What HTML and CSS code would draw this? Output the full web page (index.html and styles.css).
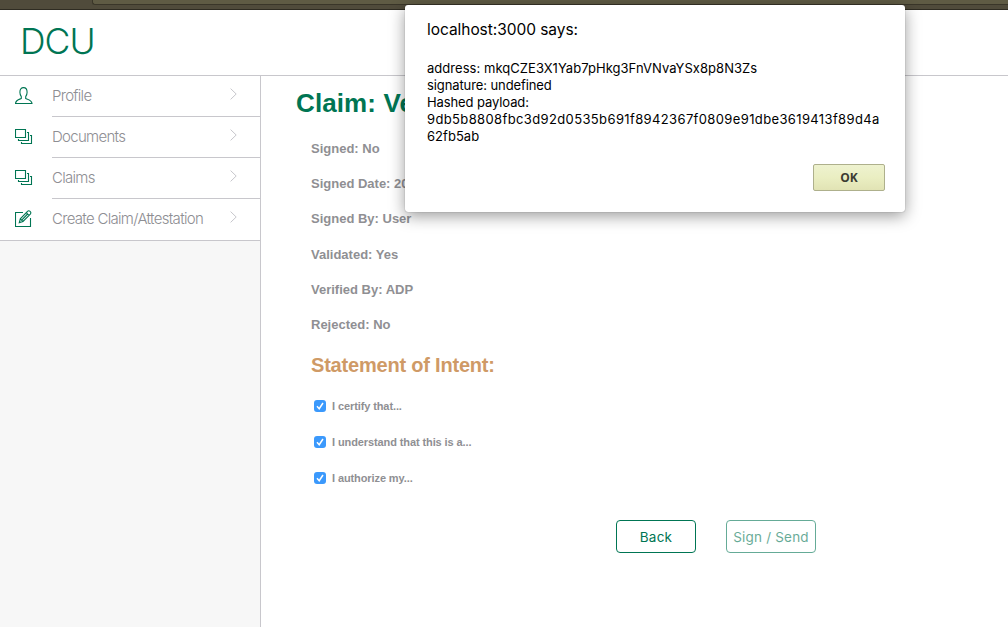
FILE: index.html
```html
<!DOCTYPE html>
<html lang="en">
<head>
<meta charset="utf-8">
<title>DCU</title>
<link rel="stylesheet" href="styles.css">
</head>
<body>
<div class="browser-bar"><div class="address-field"></div></div>
<header class="header"><span class="brand">DCU</span></header>
<div class="layout">
  <nav class="sidebar">
    <a class="item">
      <svg class="icon" viewBox="0 0 18 18"><path d="M6.3 9.6C5.5 8.5 4.9 7 4.9 5.2C4.9 2.200 6.300.6 8.500.6s3.600 1.600 3.600 4.600c0 1.800-.6 3.300-1.400 4.400v1.900c3 1.100 6.100 1.700 6.300 5H.5c.2-3.300 3-3.900 5.800-5z"/></svg>
      <span class="line"><span class="label">Profile</span><svg class="chevron" viewBox="0 0 7 12"><path d="M.6.6L6.200 6L.6 11.400"/></svg></span>
    </a>
    <a class="item">
      <svg class="icon" viewBox="0 0 18 18"><path d="M.5 1.500h10v8H.5zM12 4.500h1.500v8h-10V11M15 7.500h1.500v8h-10V14"/></svg>
      <span class="line"><span class="label">Documents</span><svg class="chevron" viewBox="0 0 7 12"><path d="M.6.6L6.200 6L.6 11.400"/></svg></span>
    </a>
    <a class="item">
      <svg class="icon" viewBox="0 0 18 18"><path d="M.5 1.500h10v8H.5zM12 4.500h1.500v8h-10V11M15 7.500h1.500v8h-10V14"/></svg>
      <span class="line"><span class="label">Claims</span><svg class="chevron" viewBox="0 0 7 12"><path d="M.6.6L6.200 6L.6 11.400"/></svg></span>
    </a>
    <a class="item item-last">
      <svg class="icon" viewBox="0 0 18 18"><path d="M8 2.500H.5v14h15V8M4.300 12.600l1-3.700L12.500 1.300q1.200-1.200 2.600.1t.2 2.700L8 11.500zM5.300 8.900L8 11.500M11.300 2.600l2.700 2.700M6.700 10.200l5.900-6.200"/></svg>
      <span class="line"><span class="label">Create Claim/Attestation</span><svg class="chevron" viewBox="0 0 7 12"><path d="M.6.6L6.200 6L.6 11.400"/></svg></span>
    </a>
  </nav>
  <main class="content">
    <h1 class="title">Claim: Ve</h1>
    <section class="details">
      <p class="field">Signed: No</p>
      <p class="field">Signed Date: 20</p>
      <p class="field">Signed By: User</p>
      <p class="field">Validated: Yes</p>
      <p class="field">Verified By: ADP</p>
      <p class="field">Rejected: No</p>
      <h2 class="subtitle">Statement of Intent:</h2>
      <div class="check"><svg class="box" viewBox="0 0 12 12"><path d="M3 6.300L5.200 8.700L9 3"/></svg><span>I certify that...</span></div>
      <div class="check"><svg class="box" viewBox="0 0 12 12"><path d="M3 6.300L5.200 8.700L9 3"/></svg><span>I understand that this is a...</span></div>
      <div class="check"><svg class="box" viewBox="0 0 12 12"><path d="M3 6.300L5.200 8.700L9 3"/></svg><span>I authorize my...</span></div>
    </section>
    <div class="actions">
      <button class="btn btn-back">Back</button>
      <button class="btn btn-send" disabled>Sign / Send</button>
    </div>
  </main>
</div>
<div class="dialog" role="alertdialog">
  <div class="dialog-title">localhost:3000 says:</div>
  <div class="dialog-text">
    <div>address: mkqCZE3X1Yab7pHkg3FnVNvaYSx8p8N3Zs</div>
    <div class="plain">signature: undefined</div>
    <div class="plain">Hashed payload:</div>
    <div class="hash">9db5b8808fbc3d92d0535b691f8942367f0809e91dbe3619413f89d4a</div>
    <div>62fb5ab</div>
  </div>
  <button class="ok">OK</button>
</div>
</body>
</html>
```
FILE: styles.css
```css
* { box-sizing: border-box; }
body {
  margin: 0;
  height: 627px;
  display: flex;
  flex-direction: column;
  overflow: hidden;
  background: #fff;
  font-family: "Liberation Sans", Arial, sans-serif;
}
.browser-bar {
  flex: none;
  height: 10px;
  padding-left: 92px;
  background: #504b3b;
  border-bottom: 1px solid #2f2c22;
}
.address-field {
  height: 5px;
  background: #5f5b44;
  border: 1px solid #3a3629;
  border-top: 0;
  border-right: 0;
  border-radius: 0 0 0 3px;
}
.header {
  flex: none;
  height: 66px;
  padding: 10px 20px 0 20px;
  border-bottom: 1px solid #c8c7cc;
}
.brand {
  font: 300 35.5px/44px Inter, sans-serif;
  letter-spacing: -1px;
  color: #007553;
}
.layout { flex: 1; display: flex; min-height: 0; }
.sidebar {
  width: 261px;
  background: #f7f7f7;
  border-right: 1px solid #c8c7cc;
}
.item {
  display: flex;
  height: 41px;
  padding-left: 15px;
  background: #fff;
}
.icon {
  flex: none;
  width: 18px;
  height: 18px;
  margin: 11px 19px 0 0;
  fill: none;
  stroke: #007553;
  stroke-width: 1.1;
}
.line {
  flex: 1;
  display: flex;
  justify-content: space-between;
  padding-right: 23px;
  border-bottom: 1px solid #c8c7cc;
}
.item-last { height: 42px; border-bottom: 1px solid #c8c7cc; }
.item-last .line { border-bottom: 0; }
.label {
  font: 300 15px/40px Inter, sans-serif;
  letter-spacing: -0.7px;
  color: #8e8e93;
  white-space: nowrap;
}
.chevron {
  width: 7px;
  height: 12px;
  margin-top: 12px;
  fill: none;
  stroke: #c7c7cc;
}
.content { flex: 1; padding: 11px 0 0 35px; }
.title {
  margin: 0;
  font-size: 26px;
  line-height: 32px;
  letter-spacing: 0.1px;
  color: #007553;
}
.details { padding: 12px 0 0 15px; }
.field {
  margin: 0;
  height: 35.2px;
  font-size: 13px;
  font-weight: 700;
  line-height: 36px;
  color: #8f8f93;
}
.subtitle {
  margin: 0;
  padding: 11px 0;
  font-size: 20px;
  line-height: 24px;
  letter-spacing: -0.2px;
  color: #cf9a66;
}
.check {
  display: flex;
  align-items: center;
  gap: 6px;
  height: 36px;
  padding-left: 3px;
  font-size: 11px;
  font-weight: 700;
  letter-spacing: -0.1px;
  color: #8f8f93;
}
.box {
  width: 12px;
  height: 12px;
  border-radius: 3px;
  background: #3b99fc;
  fill: none;
  stroke: #fff;
  stroke-width: 1.5;
}
.actions {
  display: flex;
  gap: 30px;
  padding: 24px 0 0 320px;
}
.btn {
  height: 33px;
  padding: 0;
  background: #fff;
  border: 1px solid #007553;
  border-radius: 4px;
  font: 400 13.5px/20px Inter, sans-serif;
  letter-spacing: 0.2px;
  color: #007553;
}
.btn-back { width: 80px; }
.btn-send { width: 90px; opacity: 0.6; }
.dialog {
  position: absolute;
  left: 405px;
  top: 5px;
  width: 500px;
  height: 207px;
  padding: 15px 20px 20px 22px;
  display: flex;
  flex-direction: column;
  background: #fff;
  border-radius: 3px;
  box-shadow: 0 0 1px rgba(0,0,0,.5), 0 4px 16px rgba(0,0,0,.4);
  font-family: Inter, sans-serif;
  color: #000;
}
.dialog-title { font-size: 15.5px; line-height: 20px; letter-spacing: -0.05px; }
.dialog-text {
  margin-top: 20px;
  font-size: 13px;
  line-height: 17px;
  letter-spacing: 0.04px;
  white-space: nowrap;
}
.plain { letter-spacing: -0.1px; }
.hash { letter-spacing: 0.37px; }
.ok {
  width: 72px;
  height: 27px;
  margin-top: 19px;
  align-self: flex-end;
  padding: 0;
  background: linear-gradient(#eef2cf, #eaeec2 50%, #e1e3b4);
  border: 1px solid #aeb08c;
  border-radius: 2px;
  font: 700 12px/16px "Open Sans", sans-serif;
  color: #3c3c32;
}
```
